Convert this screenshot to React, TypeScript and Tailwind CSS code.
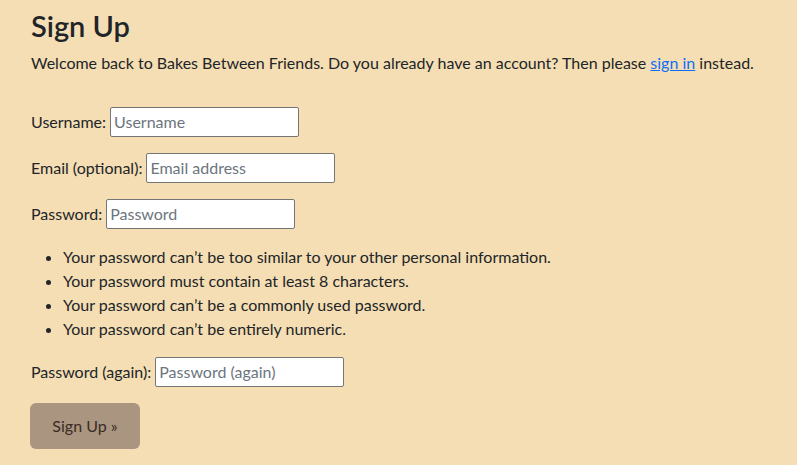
import React from 'react';

const rules = [
  'Your password can’t be too similar to your other personal information.',
  'Your password must contain at least 8 characters.',
  'Your password can’t be a commonly used password.',
  'Your password can’t be entirely numeric.',
];

function Field({ label, placeholder, type = 'text' }: { label: string; placeholder: string; type?: string }) {
  return (
    <p className="mb-4 flex items-center h-[30px]">
      <label className="mr-[4px]">{label}</label>
      <input
        type={type}
        placeholder={placeholder}
        className="h-[30px] w-[189px] bg-white border border-[#767676] rounded-[2px] px-[3px] text-[16px] text-[#212529] placeholder:text-[#6c757d] outline-none"
      />
    </p>
  );
}

export default function App() {
  return (
    <div
      className="min-h-[465px] bg-[#f5deb3] text-[#212529] text-[16px] leading-6 pl-[31px] pt-[9px]"
      style={{ fontFamily: 'Lato, sans-serif' }}
    >
      <h2 className="text-[29px] leading-[1.2] font-semibold mb-2">Sign Up</h2>
      <p className="mb-8 -mt-px">
        Welcome back to Bakes Between Friends. Do you already have an account? Then please{' '}
        <a href="#" className="text-[#0d6efd] underline">
          sign in
        </a>{' '}
        instead.
      </p>

      <form>
        <Field label="Username:" placeholder="Username" />
        <Field label="Email (optional):" placeholder="Email address" type="email" />
        <Field label="Password:" placeholder="Password" type="password" />

        <ul className="list-disc pl-8 mb-4">
          {rules.map((r) => (
            <li key={r}>{r}</li>
          ))}
        </ul>

        <Field label="Password (again):" placeholder="Password (again)" type="password" />

        <button
          type="submit"
          className="-ml-px h-[46px] w-[110px] rounded-md bg-[#a99580] text-[#3b2c22] text-[16px]"
        >
          Sign Up »
        </button>
      </form>
    </div>
  );
}
